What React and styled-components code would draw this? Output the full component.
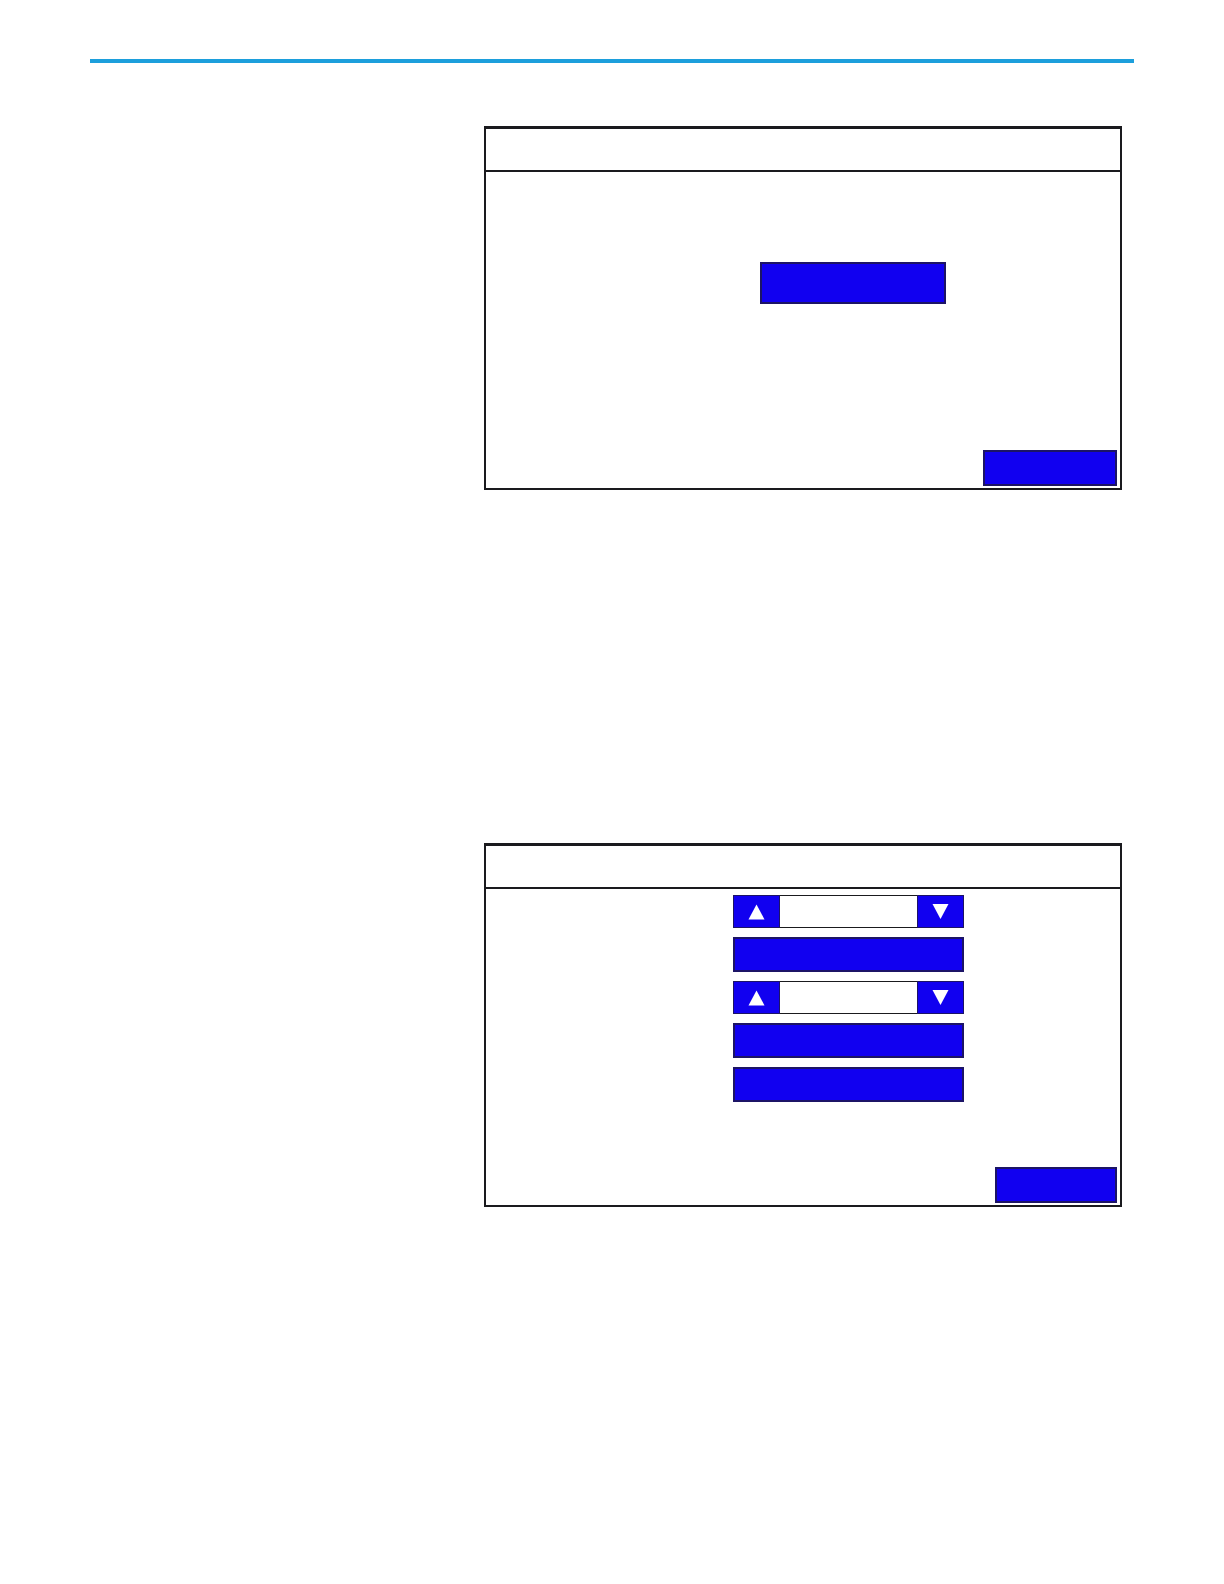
import React, { useState } from "react";
import styled, { createGlobalStyle } from "styled-components";

const ink = "#1a1a1e";
const blue = "#1100f0";
const edge = "#1c1466";

const GlobalStyle = createGlobalStyle`
  *, *::before, *::after { box-sizing: border-box; }
  body {
    margin: 0;
    background: #fff;
    color: ${ink};
    font-family: "Liberation Sans", Arial, sans-serif;
    font-size: 16px;
  }
`;

const Page = styled.div`
  min-height: 100vh;
  padding: 59px 90px 0;
`;

const Rule = styled.hr`
  height: 4px;
  margin: 0;
  border: 0;
  background: #1c9fdc;
`;

const Figures = styled.main`
  display: flex;
  flex-direction: column;
  gap: 353px;
  padding: 63px 12px 90px 394px;
`;

const Panel = styled.section`
  display: flex;
  flex-direction: column;
  min-height: 364px;
  border: 2px solid ${ink};
  border-top-width: 3px;
`;

const TitleBar = styled.header`
  height: 43px;
  border-bottom: 2px solid ${ink};
`;

const Body = styled.div`
  display: flex;
  flex: 1;
  flex-direction: column;
  align-items: flex-start;
  padding: ${({ $top, $left }) => `${$top}px 0 0 ${$left}px`};
`;

const Controls = styled.div`
  display: grid;
  width: 231px;
  gap: 9px;
`;

const Footer = styled.footer`
  display: flex;
  justify-content: flex-end;
  padding: 0 3px 2px;
`;

const PanelButton = styled.button`
  width: ${({ $width }) => $width || "100%"};
  height: ${({ $height }) => $height}px;
  padding: 0;
  border: 1px solid ${edge};
  outline: 1px solid ${edge};
  outline-offset: -2px;
  border-radius: 0;
  background: ${blue};
  color: #fff;
  cursor: pointer;
`;

const Stepper = styled.div`
  display: grid;
  grid-template-columns: 47px 1fr 47px;
  height: 33px;
`;

const StepperField = styled.input`
  width: 100%;
  min-width: 0;
  padding: 0 8px;
  border: solid ${ink};
  border-width: 1px 0;
  border-radius: 0;
  background: #fff;
  color: ${ink};
  font: inherit;
  text-align: center;
`;

const StepButton = styled.button`
  display: flex;
  align-items: center;
  justify-content: center;
  padding: 0;
  border: 1px solid ${edge};
  border-radius: 0;
  background: ${blue};
  color: #fff;
  cursor: pointer;
`;

const Arrow = ({ down }) => (
  <svg width="17" height="17" viewBox="0 0 17 17" fill="currentColor" aria-hidden="true">
    <path d={down ? "M0.5 1H16.5L8.5 16Z" : "M0.5 16.5H16.5L8.5 1.5Z"} />
  </svg>
);

function StepSelector({ label }) {
  const [value, setValue] = useState("");
  const step = (amount) => setValue((current) => String(Number(current) + amount));
  return (
    <Stepper>
      <StepButton type="button" aria-label={`${label} up`} onClick={() => step(1)}>
        <Arrow />
      </StepButton>
      <StepperField
        aria-label={label}
        value={value}
        onChange={(event) => setValue(event.target.value)}
      />
      <StepButton type="button" aria-label={`${label} down`} onClick={() => step(-1)}>
        <Arrow down />
      </StepButton>
    </Stepper>
  );
}

export default function App() {
  return (
    <>
      <GlobalStyle />
      <Page>
        <Rule />
        <Figures>
          <Panel>
            <TitleBar />
            <Body $top={90} $left={274}>
              <PanelButton type="button" aria-label="Action" $width="186px" $height={42} />
            </Body>
            <Footer>
              <PanelButton type="button" aria-label="Close" $width="134px" $height={36} />
            </Footer>
          </Panel>
          <Panel>
            <TitleBar />
            <Body $top={6} $left={247}>
              <Controls>
                <StepSelector label="First value" />
                <PanelButton type="button" aria-label="First option" $height={35} />
                <StepSelector label="Second value" />
                <PanelButton type="button" aria-label="Second option" $height={35} />
                <PanelButton type="button" aria-label="Third option" $height={35} />
              </Controls>
            </Body>
            <Footer>
              <PanelButton type="button" aria-label="Close" $width="122px" $height={36} />
            </Footer>
          </Panel>
        </Figures>
      </Page>
    </>
  );
}
